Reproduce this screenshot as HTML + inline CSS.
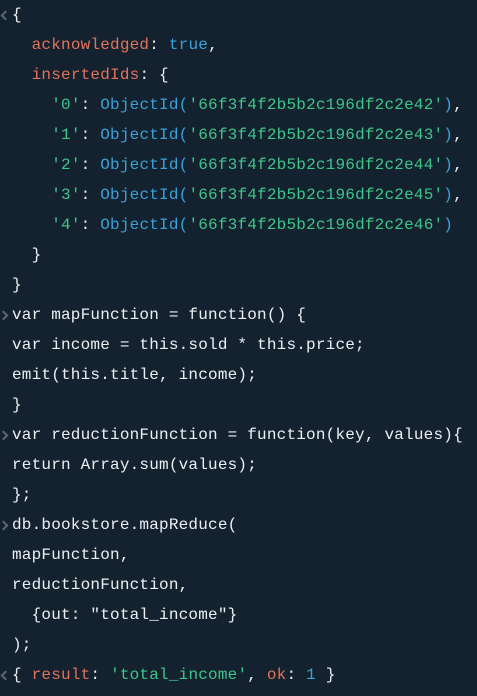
<!DOCTYPE html>
<html><head><meta charset="utf-8"><style>
html,body{margin:0;padding:0;background:#142230;width:477px;height:696px;overflow:hidden}
.c{font-family:"Liberation Mono",monospace;font-size:16px;letter-spacing:0.2px;color:#eceff2;white-space:pre;position:relative}
.l{position:absolute;left:12px;height:30px;line-height:31px}
.k{color:#e2725b}.b{color:#3aa2d8}.s{color:#3dc58a}
.ar{position:absolute;left:-10px;top:12px;width:5px;height:5px;border-left:2px solid #5a6773;border-bottom:2px solid #5a6773}
.in{transform:rotate(225deg);left:-12px}
.out{transform:rotate(45deg);left:-10px}
</style></head><body><div class="c">
<div class="l" style="top:0"><i class="ar out"></i>{</div>
<div class="l" style="top:30px">  <span class="k">acknowledged</span>: <span class="b">true</span>,</div>
<div class="l" style="top:60px">  <span class="k">insertedIds</span>: {</div>
<div class="l" style="top:90px">    <span class="s">'0'</span>: <span class="b">ObjectId(</span><span class="s">'66f3f4f2b5b2c196df2c2e42'</span><span class="b">)</span>,</div>
<div class="l" style="top:120px">    <span class="s">'1'</span>: <span class="b">ObjectId(</span><span class="s">'66f3f4f2b5b2c196df2c2e43'</span><span class="b">)</span>,</div>
<div class="l" style="top:150px">    <span class="s">'2'</span>: <span class="b">ObjectId(</span><span class="s">'66f3f4f2b5b2c196df2c2e44'</span><span class="b">)</span>,</div>
<div class="l" style="top:180px">    <span class="s">'3'</span>: <span class="b">ObjectId(</span><span class="s">'66f3f4f2b5b2c196df2c2e45'</span><span class="b">)</span>,</div>
<div class="l" style="top:210px">    <span class="s">'4'</span>: <span class="b">ObjectId(</span><span class="s">'66f3f4f2b5b2c196df2c2e46'</span><span class="b">)</span></div>
<div class="l" style="top:240px">  }</div>
<div class="l" style="top:270px">}</div>
<div class="l" style="top:300px"><i class="ar in"></i>var mapFunction = function() {</div>
<div class="l" style="top:330px">var income = this.sold * this.price;</div>
<div class="l" style="top:360px">emit(this.title, income);</div>
<div class="l" style="top:390px">}</div>
<div class="l" style="top:420px"><i class="ar in"></i>var reductionFunction = function(key, values){</div>
<div class="l" style="top:450px">return Array.sum(values);</div>
<div class="l" style="top:480px">};</div>
<div class="l" style="top:510px"><i class="ar in"></i>db.bookstore.mapReduce(</div>
<div class="l" style="top:540px">mapFunction,</div>
<div class="l" style="top:570px">reductionFunction,</div>
<div class="l" style="top:600px">  {out: "total_income"}</div>
<div class="l" style="top:630px">);</div>
<div class="l" style="top:660px"><i class="ar out"></i>{ <span class="k">result</span>: <span class="s">'total_income'</span>, <span class="k">ok</span>: <span class="b">1</span> }</div>
</div></body></html>
